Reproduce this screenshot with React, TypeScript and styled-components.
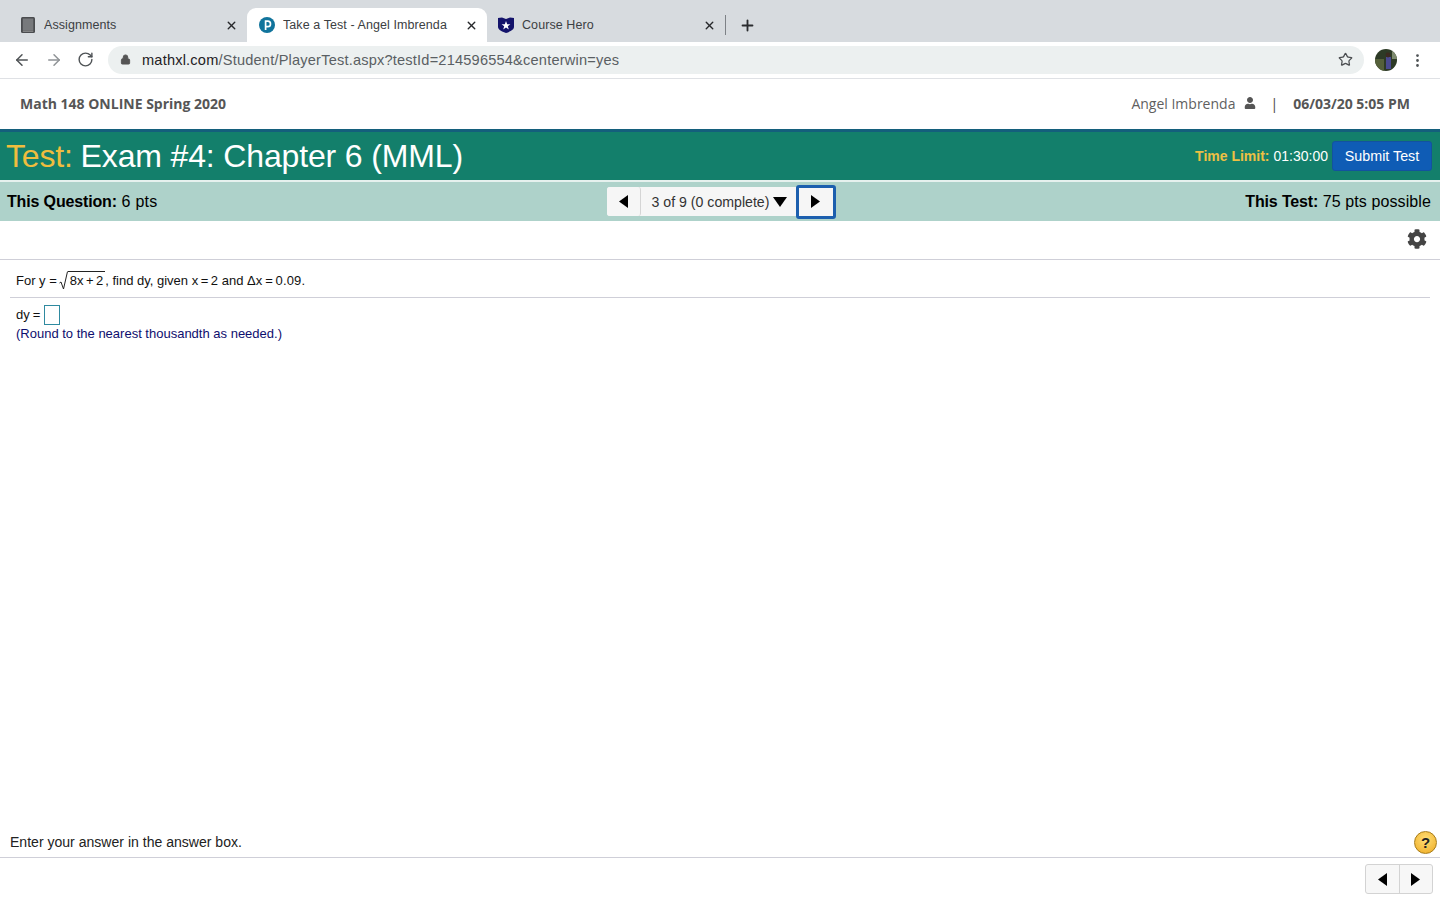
import React from 'react';
import styled, { createGlobalStyle } from 'styled-components';
import { ArrowLeft, ArrowRight, RotateCw, Lock, Star, X, Plus, MoreVertical } from 'lucide-react';
import { FaUser, FaCog } from 'react-icons/fa';

const Global = createGlobalStyle`
  html, body { margin: 0; padding: 0; background: #fff; }
  body { font-family: "Liberation Sans", Arial, sans-serif; overflow: hidden; }
`;
const Page = styled.div`
  width: 1440px; height: 900px; display: flex; flex-direction: column; overflow: hidden;
`;
const TabStrip = styled.div`
  height: 42px; box-sizing: border-box; background: #d7dbdf; padding: 8px 0 0 8px;
  display: flex; align-items: stretch; flex: none;
`;
const Tab = styled.div<{ $active?: boolean; $w: number; $pad?: number }>`
  width: ${p => p.$w}px; box-sizing: border-box; display: flex; align-items: center;
  padding: 0 9px 0 ${p => p.$pad ?? 12}px; font: 12.5px "Liberation Sans", sans-serif; color: #3c4043;
  background: ${p => (p.$active ? '#fff' : 'transparent')};
  border-radius: 9px 9px 0 0;
`;
const TabIconSlot = styled.span`
  width: 16px; height: 16px; margin-right: 8px; display: flex; flex: none;
`;
const TabTitle = styled.span`
  flex: 1; white-space: nowrap; overflow: hidden; letter-spacing: .08px;
`;
const TabClose = styled(X)`
  width: 13px; height: 13px; color: #26282b; flex: none; stroke-width: 2.6;
`;
const TabDivider = styled.div`
  width: 1px; height: 20px; background: #7d8186; align-self: center;
`;
const NewTab = styled(Plus)`
  width: 17px; height: 17px; color: #2a2c2f; stroke-width: 2.6; margin-left: 13px; align-self: center;
`;
const Toolbar = styled.div`
  height: 37px; box-sizing: border-box; flex: none; background: #fff; border-bottom: 1px solid #dfe1e5;
  display: flex; align-items: center; padding: 0 14px 0 13px;
`;
const NavIcon = styled.span<{ $dim?: boolean }>`
  width: 18px; height: 18px; display: flex; margin-right: 14px; color: ${p => (p.$dim ? '#8f9396' : '#4f5356')};
`;
const Omnibox = styled.div`
  flex: none; width: 1256px; height: 28px; margin-left: 0; border-radius: 14px; background: #ecf0f0;
  display: flex; align-items: center; padding: 0 11px 0 12px; box-sizing: border-box;
  font: 14.6px "Liberation Sans", sans-serif; color: #5a5f63; margin-top: -1px;
`;
const Host = styled.span` color: #1f2124; `;
const Url = styled.span` flex: 1; margin-left: 11px; white-space: nowrap; letter-spacing: .19px; `;
const Avatar = styled.div`
  width: 22px; height: 22px; border-radius: 50%; margin-left: 11px; flex: none; overflow: hidden;
`;
const Kebab = styled(MoreVertical)`
  width: 17px; height: 17px; color: #4f5356; margin-left: 12px; flex: none;
`;
const CourseBar = styled.div`
  height: 50px; flex: none; display: flex; align-items: center; justify-content: space-between;
  padding: 0 30px 2px 20px; box-sizing: border-box; font: 14px "Open Sans", sans-serif; color: #5a5a5a;
`;
const CourseName = styled.b` font-weight: 700; color: #565656; `;
const UserBox = styled.div` display: flex; align-items: center; `;
const UserName = styled.span` margin-right: 9px; color: #5f5f5f; `;
const Pipe = styled.span` margin: 0 15px 0 14px; color: #444; `;
const Stamp = styled.b` font-weight: 700; color: #565656; `;
const TitleBar = styled.div`
  height: 51px; box-sizing: border-box; flex: none; background: #137f6b; border-top: 3px solid #145f7c;
  display: flex; align-items: center; justify-content: space-between; padding: 0 8px 0 6px;
`;
const Title = styled.div`
  font: 32px "Liberation Sans", sans-serif; color: #fff; letter-spacing: -.15px; white-space: nowrap;
`;
const Gold = styled.span` color: #f0bd3e; margin-right: -1px; `;
const TimeBox = styled.div`
  display: flex; align-items: center; font: 14px "Liberation Sans", sans-serif; color: #fff;
`;
const GoldLabel = styled.b` color: #eec043; margin-right: 4px; `;
const Submit = styled.button`
  width: 100px; height: 30px; margin-left: 4px; border: 1px solid #13529f; border-radius: 3px;
  background: #0f5cb5; color: #fff; font: 14.3px "Liberation Sans", sans-serif; padding: 0;
`;
const InfoBar = styled.div`
  height: 41px; box-sizing: border-box; flex: none; background: #aed2ca; border-top: 2px solid #e6f1ee;
  display: grid; grid-template-columns: 1fr auto 1fr; align-items: center; padding: 0 9px 0 7px;
  font: 16px "Liberation Sans", sans-serif; color: #000;
`;
const InfoLabel = styled.b` letter-spacing: -.15px; `;
const InfoLeft = styled.div` letter-spacing: .25px; `;
const Right = styled.div` text-align: right; letter-spacing: .1px; `;
const Pager = styled.div`
  display: flex; align-items: center; height: 29px; background: #f6f6f6; border-radius: 3px;
  position: relative; left: 2px;
`;
const PagerArrow = styled.div<{ $focus?: boolean; $divider?: boolean }>`
  flex: none; width: ${p => (p.$focus ? 40 : 34)}px; height: ${p => (p.$focus ? 34 : 29)}px; box-sizing: border-box;
  display: flex; align-items: center; justify-content: center; background: #f6f6f6;
  border-right: ${p => (p.$divider ? '1px solid #d5d5d5' : 'none')};
  border: ${p => (p.$focus ? '3px solid #1c5fae' : undefined)};
  border-radius: 3px;
`;
const PagerLabel = styled.div`
  width: 155px; box-sizing: border-box; padding-left: 11px; display: flex; align-items: center;
  font: 14.15px "Liberation Sans", sans-serif; color: #333; white-space: nowrap;
`;
const ToolRow = styled.div`
  height: 39px; box-sizing: border-box; flex: none; border-bottom: 1px solid #cfcfd8;
  display: flex; justify-content: flex-end; align-items: center; padding: 0 13px 2px 0; color: #444;
`;
const Question = styled.div`
  padding: 0 10px; flex: 1; font: 13px "Liberation Sans", sans-serif; color: #111;
`;
const Stem = styled.div`
  height: 38px; box-sizing: border-box; border-bottom: 1px solid #cfcfd8; padding: 10px 0 0 6px;
  display: flex; align-items: flex-start; white-space: pre; line-height: 21px;
`;
const MathPart = styled.span` word-spacing: -1.1px; `;
const Delta = styled(MathPart)` letter-spacing: .15px; `;
const Root = styled.span`
  border-top: 1px solid #222; margin: 1px 0 0 0; padding: 0 2px 0 2px; line-height: 17px; height: 18px; word-spacing: -1.2px;
`;
const RootSign = styled.svg` width: 9px; height: 19px; margin-left: 2px; margin-top: 1px; flex: none; `;
const AnswerRow = styled.div`
  display: flex; align-items: center; padding: 7px 0 0 6px; height: 20px;
`;
const AnswerLabel = styled.span` margin-bottom: 2px; word-spacing: -.5px; `;
const AnswerBox = styled.div`
  width: 16px; height: 20px; box-sizing: border-box; border: 1px solid #2f8aa0; margin-left: 4px; background: #fff;
`;
const Hint = styled.div` padding: 1px 0 0 6px; color: #0e0e6e; font-size: 13px; line-height: 16px; `;
const StatusBar = styled.div`
  height: 31px; box-sizing: border-box; flex: none; border-bottom: 1px solid #cfcfd8; display: flex; align-items: center;
  justify-content: space-between; padding: 0 3px 0 10px; font: 14.05px "Liberation Sans", sans-serif; color: #222;
`;
const Help = styled.div`
  width: 23px; height: 23px; border-radius: 50%; box-sizing: border-box; border: 1px solid #a77c18;
  background: radial-gradient(circle at 50% 35%, #ffdf76, #eeaa23); color: #222;
  font: bold 15px "Liberation Sans", sans-serif; display: flex; align-items: center; justify-content: center;
`;
const BottomBar = styled.div`
  height: 42px; flex: none; display: flex; justify-content: flex-end; padding: 6px 7px 0 0; box-sizing: border-box;
`;
const BottomPager = styled.div`
  display: flex; height: 30px; width: 68px; box-sizing: border-box; border: 1px solid #d3d3d3; border-radius: 3px; background: #f7f7f7;
`;
const BottomArrow = styled.div<{ $divider?: boolean }>`
  flex: 1; display: flex; align-items: center; justify-content: center;
  border-right: ${p => (p.$divider ? '1px solid #d3d3d3' : 'none')};
`;
const Spacer = styled.div` flex: 1; `;

const Tri = ({ dir }: { dir: 'l' | 'r' | 'd' }) => {
  const pts = dir === 'l' ? '9,0 9,13 0,6.5' : dir === 'r' ? '0,0 0,13 9,6.5' : '0,0 14,0 7,10';
  const w = dir === 'd' ? 14 : 9;
  const h = dir === 'd' ? 10 : 13;
  return <svg width={w} height={h} viewBox={`0 0 ${w} ${h}`}><polygon points={pts} fill="#000" /></svg>;
};

export default function App() {
  return (
    <Page>
      <Global />
      <TabStrip>
        <Tab $w={239}>
          <TabIconSlot>
            <svg width="16" height="16" viewBox="0 0 16 16"><rect x="1" y="0" width="14" height="16" rx="1.5" fill="#4a4c4f" /><rect x="2.8" y="1.5" width="10.5" height="11.5" fill="#77797c" /><rect x="2.8" y="13.6" width="10.5" height="1" fill="#aaa" /></svg>
          </TabIconSlot>
          <TabTitle>Assignments</TabTitle><TabClose />
        </Tab>
        <Tab $w={240} $active>
          <TabIconSlot>
            <svg width="16" height="16" viewBox="0 0 16 16"><circle cx="8" cy="8" r="8" fill="#11749c" /><path d="M6.6 13V4.2h2.2a2.6 2.6 0 0 1 0 5.4H6.6" fill="none" stroke="#fff" strokeWidth="1.7" /></svg>
          </TabIconSlot>
          <TabTitle>Take a Test - Angel Imbrenda</TabTitle><TabClose />
        </Tab>
        <Tab $w={238} $pad={11}>
          <TabIconSlot>
            <svg width="16" height="16" viewBox="0 0 16 16"><path d="M0 1 L4 0.5 L8 2 L12 0.5 L16 1 V10 C16 13 11 15 8 16 C5 15 0 13 0 10Z" fill="#14136b" /><polygon points="8,4 9.2,7.2 12.4,7.2 9.8,9.2 10.8,12.4 8,10.4 5.2,12.4 6.2,9.2 3.6,7.2 6.8,7.2" fill="#fff" /></svg>
          </TabIconSlot>
          <TabTitle>Course Hero</TabTitle><TabClose />
        </Tab>
        <TabDivider />
        <NewTab />
      </TabStrip>
      <Toolbar>
        <NavIcon><ArrowLeft size={18} /></NavIcon>
        <NavIcon $dim><ArrowRight size={18} /></NavIcon>
        <NavIcon><RotateCw size={17} /></NavIcon>
        <Omnibox>
          <Lock size={11} fill="#555" color="#555" />
          <Url><Host>mathxl.com</Host>/Student/PlayerTest.aspx?testId=214596554&amp;centerwin=yes</Url>
          <Star size={15} color="#4a4d50" />
        </Omnibox>
        <Avatar>
          <svg width="22" height="22" viewBox="0 0 22 22"><rect width="22" height="22" fill="#2d3a26" /><rect x="0" y="10" width="9" height="12" fill="#55603a" /><rect x="11" y="8" width="5" height="12" fill="#4a4a90" /><circle cx="13" cy="6" r="2.4" fill="#3c2a20" /><rect x="17" y="0" width="5" height="10" fill="#7d8a6e" /></svg>
        </Avatar>
        <Kebab />
      </Toolbar>
      <CourseBar>
        <CourseName>Math 148 ONLINE Spring 2020</CourseName>
        <UserBox>
          <UserName>Angel Imbrenda</UserName>
          <FaUser size={12} color="#555" />
          <Pipe>|</Pipe>
          <Stamp>06/03/20 5:05 PM</Stamp>
        </UserBox>
      </CourseBar>
      <TitleBar>
        <Title><Gold>Test:</Gold> Exam #4: Chapter 6 (MML)</Title>
        <TimeBox>
          <GoldLabel>Time Limit:</GoldLabel>01:30:00
          <Submit>Submit Test</Submit>
        </TimeBox>
      </TitleBar>
      <InfoBar>
        <InfoLeft><InfoLabel>This Question:</InfoLabel> 6 pts</InfoLeft>
        <Pager>
          <PagerArrow $divider><Tri dir="l" /></PagerArrow>
          <PagerLabel>3 of 9 (0 complete)&nbsp;<Tri dir="d" /></PagerLabel>
          <PagerArrow $focus><Tri dir="r" /></PagerArrow>
        </Pager>
        <Right><InfoLabel>This Test:</InfoLabel> 75 pts possible</Right>
      </InfoBar>
      <ToolRow><FaCog size={20} /></ToolRow>
      <Question>
        <Stem>
          {'For y ='}
          <RootSign viewBox="0 0 9 19"><path d="M0.5 12 L2 11 L4.5 18 L8.5 0.5" fill="none" stroke="#222" strokeWidth="1" /></RootSign>
          <Root>8x + 2</Root>{', find dy, given '}<MathPart>x = 2</MathPart>{' and '}<Delta>Δx = 0.09.</Delta>
        </Stem>
        <AnswerRow><AnswerLabel>dy =</AnswerLabel><AnswerBox /></AnswerRow>
        <Hint>(Round to the nearest thousandth as needed.)</Hint>
      </Question>
      <Spacer />
      <StatusBar>
        Enter your answer in the answer box.
        <Help>?</Help>
      </StatusBar>
      <BottomBar>
        <BottomPager>
          <BottomArrow $divider><Tri dir="l" /></BottomArrow>
          <BottomArrow><Tri dir="r" /></BottomArrow>
        </BottomPager>
      </BottomBar>
    </Page>
  );
}
